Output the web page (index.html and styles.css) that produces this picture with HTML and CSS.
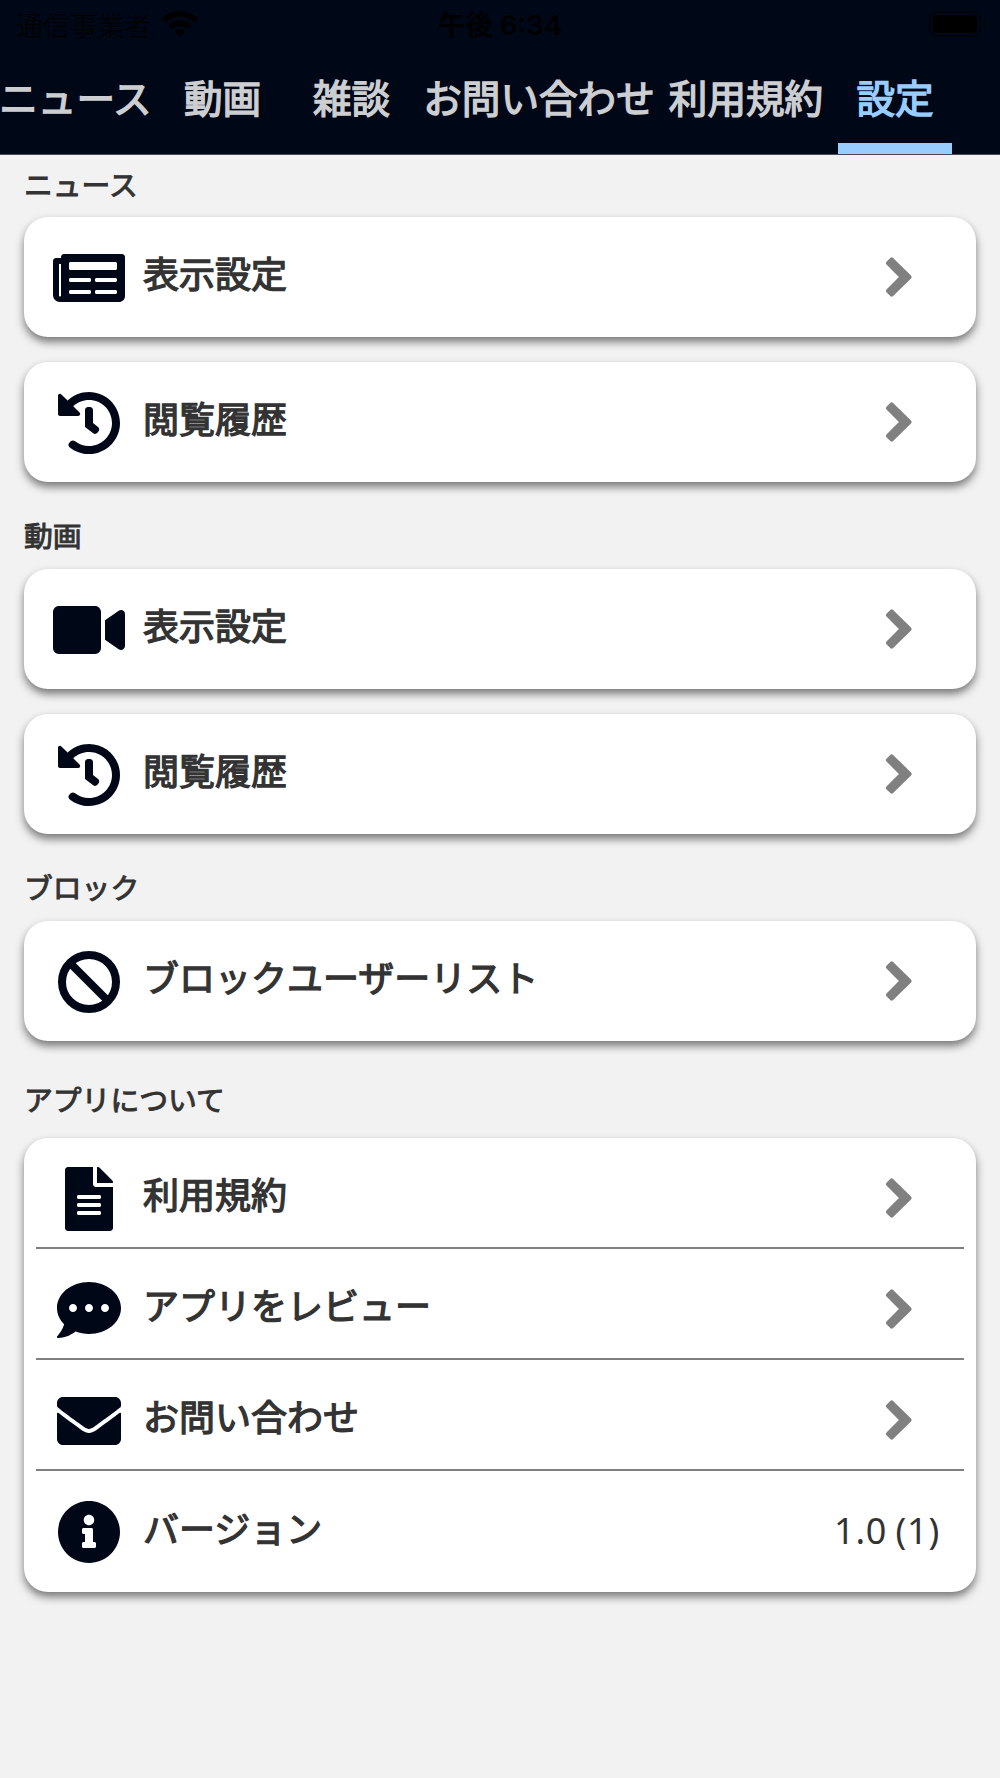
FILE: index.html
```html
<!doctype html>
<html lang="ja">
<head>
<meta charset="utf-8">
<meta name="viewport" content="width=device-width, initial-scale=1">
<title>設定</title>
<link rel="stylesheet" href="styles.css">
</head>

<body>

	<!-- shared icons -->
	<svg class="defs">
		<symbol id="chevron" viewBox="0 0 30 48"><path d="M3.900 10.100L7.700 6.300 25.600 24 7.700 41.700 3.900 37.900 17.800 24z" stroke="#808080" stroke-width="4" stroke-linejoin="round"/></symbol>
		<symbol id="history" viewBox="0 0 512 512"><path d="M504 255.531c.253 136.64-111.18 248.372-247.82 248.468-59.015.042-113.223-20.53-155.822-54.911-11.077-8.94-11.905-25.541-1.839-35.607l11.267-11.267c8.609-8.609 22.353-9.551 31.891-1.984C173.062 425.135 212.781 440 256 440c101.705 0 184-82.311 184-184 0-101.705-82.311-184-184-184-48.814 0-93.149 18.969-126.068 49.932l50.754 50.754c10.08 10.08 2.941 27.314-11.313 27.314H24c-8.837 0-16-7.163-16-16V38.627c0-14.254 17.234-21.393 27.314-11.314l49.372 49.372C129.209 34.136 189.552 8 256 8c136.81 0 247.747 110.78 248 247.531zm-180.912 78.784l9.823-12.63c8.138-10.463 6.253-25.542-4.21-33.679L288 256.349V152c0-13.255-10.745-24-24-24h-16c-13.255 0-24 10.745-24 24v135.651l65.409 50.874c10.463 8.137 25.541 6.253 33.679-4.21z"/></symbol>
	</svg>

	<div class="header">
		<div class="statusBar">
			<div class="carrier">
				<span>通信事業者</span>
				<svg class="wifi" viewBox="0 0 36 26"><path d="M18 0C11 0 4.800 2.700 0 7.200l3.900 4.100C7.700 7.900 12.600 5.800 18 5.800s10.300 2.100 14.100 5.500L36 7.200C31.200 2.700 25 0 18 0zM18 9.300c-4.500 0-8.500 1.700-11.600 4.500l3.900 4.100c2.100-1.800 4.700-2.800 7.700-2.800s5.600 1 7.700 2.800l3.900-4.100C26.500 11 22.500 9.300 18 9.300zM18 18c-2.100 0-3.900.8-5.300 2L18 26l5.300-6c-1.400-1.200-3.200-2-5.300-2z"/></svg>
			</div>
			<div class="time">午後 6:34</div>
			<svg class="battery" viewBox="0 0 58 26"><rect x="1" y="1" width="50" height="24" rx="7" fill="none" stroke="#00040c" stroke-width="2"/><rect x="4" y="4" width="44" height="18" rx="4"/><path d="M54.500 8.500c3.500 1.800 3.500 7.200 0 9z" fill="#00040c"/></svg>
		</div>
		<div class="tabs">
			<a class="tab news">ニュース</a>
			<a class="tab video">動画</a>
			<a class="tab chat">雑談</a>
			<a class="tab contact">お問い合わせ</a>
			<a class="tab terms">利用規約</a>
			<a class="tab settings active">設定</a>
		</div>
	</div>

	<div class="content">
		<h2>ニュース</h2>
		<div class="card">
			<div class="row">
				<span class="icon"><svg width="72" height="64" viewBox="0 0 576 512"><path fill-rule="evenodd" d="M552 64H88c-13 0-24 11-24 24v8H24c-13 0-24 11-24 24v272c0 31 25 56 56 56h472c27 0 48-21 48-48V88c0-13-11-24-24-24zM56 404c-5 0-8-4-8-9V144h16v251c0 5-3 9-8 9zM140 128h360c7 0 12 5 12 12v40c0 7-5 12-12 12H140c-7 0-12-5-12-12v-40c0-7 5-12 12-12zM140 256h152c7 0 12 5 12 12v8c0 7-5 12-12 12H140c-7 0-12-5-12-12v-8c0-7 5-12 12-12zM348 256h152c7 0 12 5 12 12v8c0 7-5 12-12 12H348c-7 0-12-5-12-12v-8c0-7 5-12 12-12zM140 352h152c7 0 12 5 12 12v8c0 7-5 12-12 12H140c-7 0-12-5-12-12v-8c0-7 5-12 12-12zM348 352h152c7 0 12 5 12 12v8c0 7-5 12-12 12H348c-7 0-12-5-12-12v-8c0-7 5-12 12-12z"/></svg></span>
				<span class="label">表示設定</span>
				<svg class="chevron"><use href="#chevron"/></svg>
			</div>
		</div>
		<div class="card">
			<div class="row">
				<span class="icon"><svg width="64" height="64"><use href="#history"/></svg></span>
				<span class="label">閲覧履歴</span>
				<svg class="chevron"><use href="#chevron"/></svg>
			</div>
		</div>

		<h2>動画</h2>
		<div class="card">
			<div class="row">
				<span class="icon"><svg width="72" height="64" viewBox="0 0 576 512"><path d="M336.200 64H47.800C21.400 64 0 85.400 0 111.800v288.400C0 426.600 21.400 448 47.800 448h288.400c26.400 0 47.800-21.400 47.800-47.800V111.800c0-26.400-21.400-47.800-47.800-47.800zm189.400 37.700L416 177.300v157.400l109.600 75.500c21.200 14.600 50.400-.3 50.400-25.800V127.500c0-25.400-29.100-40.400-50.400-25.800z"/></svg></span>
				<span class="label">表示設定</span>
				<svg class="chevron"><use href="#chevron"/></svg>
			</div>
		</div>
		<div class="card">
			<div class="row">
				<span class="icon"><svg width="64" height="64"><use href="#history"/></svg></span>
				<span class="label">閲覧履歴</span>
				<svg class="chevron"><use href="#chevron"/></svg>
			</div>
		</div>

		<h2>ブロック</h2>
		<div class="card">
			<div class="row">
				<span class="icon"><svg width="64" height="64" viewBox="0 0 512 512"><circle cx="256" cy="256" r="216" fill="none" stroke="#000818" stroke-width="64"/><path d="M108 108l296 296" stroke="#000818" stroke-width="64"/></svg></span>
				<span class="label">ブロックユーザーリスト</span>
				<svg class="chevron"><use href="#chevron"/></svg>
			</div>
		</div>

		<h2 class="about">アプリについて</h2>
		<div class="card list">
			<div class="row">
				<span class="icon"><svg width="48" height="64" viewBox="0 0 384 512"><path d="M224 136V0H24C10.700 0 0 10.700 0 24v464c0 13.300 10.700 24 24 24h336c13.300 0 24-10.700 24-24V160H248c-13.200 0-24-10.800-24-24zm64 236c0 6.600-5.400 12-12 12H108c-6.600 0-12-5.400-12-12v-8c0-6.600 5.400-12 12-12h168c6.600 0 12 5.400 12 12v8zm0-64c0 6.600-5.400 12-12 12H108c-6.600 0-12-5.400-12-12v-8c0-6.600 5.400-12 12-12h168c6.600 0 12 5.400 12 12v8zm0-72v8c0 6.600-5.400 12-12 12H108c-6.600 0-12-5.400-12-12v-8c0-6.600 5.400-12 12-12h168c6.600 0 12 5.400 12 12zm96-114.100v6.100H256V0h6.100c6.400 0 12.500 2.500 17 7l97.900 98c4.500 4.500 7 10.600 7 16.900z"/></svg></span>
				<span class="label">利用規約</span>
				<svg class="chevron"><use href="#chevron"/></svg>
			</div>
			<div class="row">
				<span class="icon"><svg width="64" height="64" viewBox="0 0 512 512"><path d="M256 32C114.600 32 0 125.100 0 240c0 49.600 21.400 95 57 130.700C44.500 421.100 2.700 466 2.200 466.500c-2.200 2.300-2.800 5.700-1.500 8.700S4.800 480 8 480c66.300 0 116-31.800 140.600-51.400 32.700 12.300 69 19.400 107.400 19.400 141.400 0 256-93.100 256-208S397.400 32 256 32zM128 272c-17.700 0-32-14.300-32-32s14.300-32 32-32 32 14.300 32 32-14.300 32-32 32zm128 0c-17.700 0-32-14.300-32-32s14.300-32 32-32 32 14.300 32 32-14.300 32-32 32zm128 0c-17.700 0-32-14.300-32-32s14.300-32 32-32 32 14.300 32 32-14.300 32-32 32z"/></svg></span>
				<span class="label">アプリをレビュー</span>
				<svg class="chevron"><use href="#chevron"/></svg>
			</div>
			<div class="row">
				<span class="icon"><svg width="64" height="64" viewBox="0 0 512 512"><path d="M502.300 190.800c3.900-3.100 9.700-.2 9.700 4.700V400c0 26.500-21.500 48-48 48H48c-26.500 0-48-21.500-48-48V195.600c0-5 5.700-7.800 9.700-4.700 22.400 17.400 52.100 39.500 154.100 113.600 21.100 15.400 56.700 47.800 92.200 47.600 35.700.3 72-32.800 92.300-47.600 102-74.100 131.600-96.300 154-113.700zM256 320c23.200.4 56.600-29.200 73.400-41.400 132.700-96.300 142.800-104.700 173.400-128.700 5.800-4.500 9.200-11.500 9.200-18.900v-19c0-26.500-21.500-48-48-48H48c-26.500 0-48 21.500-48 48v19c0 7.400 3.400 14.300 9.200 18.900 30.600 23.900 40.700 32.400 173.400 128.700 16.800 12.200 50.200 41.800 73.400 41.400z"/></svg></span>
				<span class="label">お問い合わせ</span>
				<svg class="chevron"><use href="#chevron"/></svg>
			</div>
			<div class="row">
				<span class="icon"><svg width="64" height="64" viewBox="0 0 512 512"><path d="M256 8C119.043 8 8 119.083 8 256c0 136.997 111.043 248 248 248s248-111.003 248-248C504 119.083 392.957 8 256 8zm0 110c23.196 0 42 18.804 42 42s-18.804 42-42 42-42-18.804-42-42 18.804-42 42-42zm56 254c0 6.627-5.373 12-12 12h-88c-6.627 0-12-5.373-12-12v-24c0-6.627 5.373-12 12-12h12v-64h-12c-6.627 0-12-5.373-12-12v-24c0-6.627 5.373-12 12-12h64c6.627 0 12 5.373 12 12v100h12c6.627 0 12 5.373 12 12v24z"/></svg></span>
				<span class="label">バージョン</span>
				<span class="version">1.0 (1)</span>
			</div>
		</div>
	</div>

</body>
</html>
```

FILE: styles.css
```css
* {
	box-sizing: border-box;
}

body {
	margin: 0;
	min-height: 1778px;
	font-family: "Noto Sans CJK JP", sans-serif;
	background-color: #F2F2F2;
	color: #333333;
}

.defs {
	display: none;
}

.header {
	height: 155px;
	background: #000818;
	border-bottom: 1px solid #4a4a58;
	overflow: hidden;
}

.statusBar {
	display: grid;
	grid-template-columns: 1fr auto 1fr;
	align-items: center;
	height: 50px;
	padding: 0 13px 0 16px;
	color: #000000;
	font-size: 27px;
	line-height: 50px;
}

.carrier {
	display: flex;
	align-items: center;
	gap: 11px;
	font-weight: 300;
}

.wifi {
	width: 36px;
	height: 26px;
	margin-bottom: 3px;
}

.time {
	font-family: Inter, "Noto Sans CJK JP", sans-serif;
	font-size: 27.5px;
	font-weight: 600;
	margin-right: 3px;
}

.battery {
	width: 58px;
	height: 26px;
	justify-self: end;
	margin-bottom: 2px;
}

.tabs {
	display: flex;
	height: 105px;
	margin-left: -15px;
}

.tab {
	display: flex;
	flex: none;
	justify-content: center;
	height: 105px;
	white-space: nowrap;
	color: #CDCED1;
	font-size: 38.6px;
	font-weight: 400;
	line-height: 92px;
	-webkit-text-stroke: 1.4px;
}

.news {
	width: 181px;
}

.video {
	width: 113px;
}

.chat {
	width: 145px;
}

.contact {
	width: 230px;
}

.terms {
	width: 184px;
}

.settings {
	width: 114px;
}

.active {
	color: #99CCFF;
	border-bottom: 12px solid #99CCFF;
}

.content {
	padding: 0 24px;
}

h2 {
	margin: 0;
	height: 62px;
	font-size: 28.8px;
	font-weight: 400;
	line-height: 58px;
	-webkit-text-stroke: 1px;
}

.card {
	margin-bottom: 25px;
	background: #FFFFFF;
	border-radius: 24px;
	box-shadow: 0 5px 9px rgba(0, 0, 0, 0.5);
}

.card + .card {
	margin-bottom: 24px;
}

.card + h2 {
	height: 63px;
}

.card + h2.about {
	height: 72px;
	padding-top: 4px;
}

.row {
	display: flex;
	align-items: center;
	height: 120px;
	padding: 1px 29px 0;
}

.icon {
	display: flex;
	justify-content: center;
	width: 72px;
	margin-right: 18px;
	fill: #000818;
}

.label {
	flex: 1;
	font-size: 36px;
	font-weight: 400;
	line-height: 60px;
	margin-bottom: 11px;
	-webkit-text-stroke: 1.3px;
}

.chevron {
	width: 30px;
	height: 48px;
	margin-right: 33px;
	margin-bottom: 2px;
	fill: #808080;
}

.list {
	padding: 0 12px;
}

.list .row {
	height: 111px;
	padding: 12px 17px 0;
	border-bottom: 2px solid #808080;
}

.list .row:last-child {
	height: 121px;
	padding-top: 1px;
	border-bottom: none;
}

.version {
	font-family: "Noto Sans", sans-serif;
	font-size: 36px;
	letter-spacing: 0.8px;
	word-spacing: -2px;
	margin-right: 7px;
	margin-bottom: 4px;
}
```
